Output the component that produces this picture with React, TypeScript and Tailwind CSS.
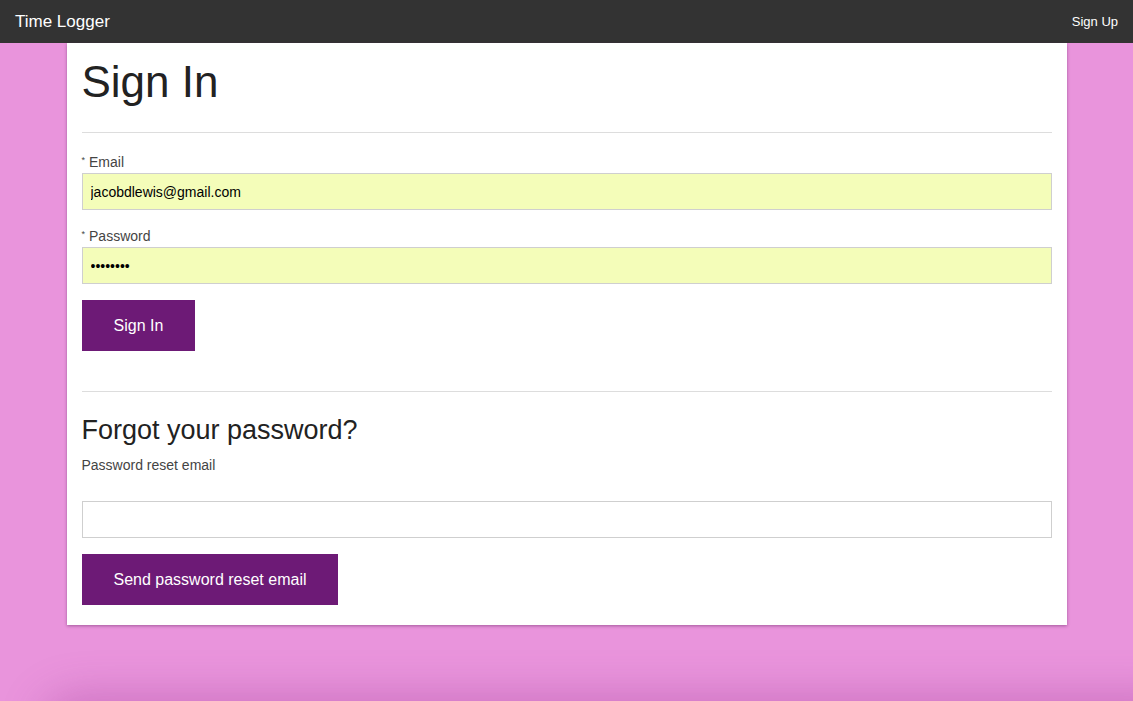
export default function App() {
  return (
    <div className="relative min-h-[701px] overflow-hidden bg-[#e994dc] font-['Liberation_Sans',Arial,sans-serif]">
      <nav className="flex h-[43px] items-center justify-between bg-[#333333] px-[15px] text-white">
        <span className="text-[17px]">Time Logger</span>
        <span className="text-[13px]">Sign Up</span>
      </nav>

      <main className="mx-auto w-[1000px] bg-white px-[15px] pb-[20px] pt-[15px] shadow-[0_1px_3px_rgba(80,20,80,0.45)]">
        <h1 className="text-[44px] leading-[48px] text-[#222]">Sign In</h1>
        <hr className="mt-[26px] border-0 border-t border-[#ddd]" />

        <form className="flex flex-col">
          <label className="mt-[19px] flex h-[20px] items-center text-[14px] text-[#444]">
            <span className="mb-[4px] mr-[4px] text-[9px] leading-none">*</span>Email
          </label>
          <input
            readOnly
            value="jacobdlewis@gmail.com"
            className="mt-[1px] h-[37px] w-full border border-[#cfcfcf] bg-[#f4fdb9] px-[8px] text-[14px] text-black outline-none"
          />

          <label className="mt-[16px] flex h-[20px] items-center text-[14px] text-[#444]">
            <span className="mb-[4px] mr-[4px] text-[9px] leading-none">*</span>Password
          </label>
          <input
            readOnly
            type="password"
            value="password"
            className="mt-[1px] h-[37px] w-full border border-[#cfcfcf] bg-[#f4fdb9] px-[8px] text-[14px] text-black outline-none"
          />

          <button
            type="button"
            className="mt-[16px] h-[51px] self-start bg-[#6d1a76] px-[32px] text-[16px] text-white"
          >
            Sign In
          </button>
        </form>

        <hr className="mt-[40px] border-0 border-t border-[#ddd]" />

        <h2 className="mt-[23px] text-[27px] leading-[30px] text-[#222]">Forgot your password?</h2>
        <label className="mt-[10px] block h-[20px] text-[14px] leading-[20px] text-[#444]">
          Password reset email
        </label>
        <input
          readOnly
          className="mt-[26px] block h-[37px] w-full border border-[#cfcfcf] bg-white px-[8px] text-[14px] outline-none"
        />
        <button
          type="button"
          className="mt-[16px] h-[51px] bg-[#6d1a76] px-[32px] text-[16px] text-white"
        >
          Send password reset email
        </button>
      </main>

      <div className="pointer-events-none fixed bottom-[-40px] left-[40px] right-[-40px] h-[40px] rounded-tl-[40px] shadow-[0_-6px_40px_rgba(150,50,140,0.35)]" />
    </div>
  )
}
